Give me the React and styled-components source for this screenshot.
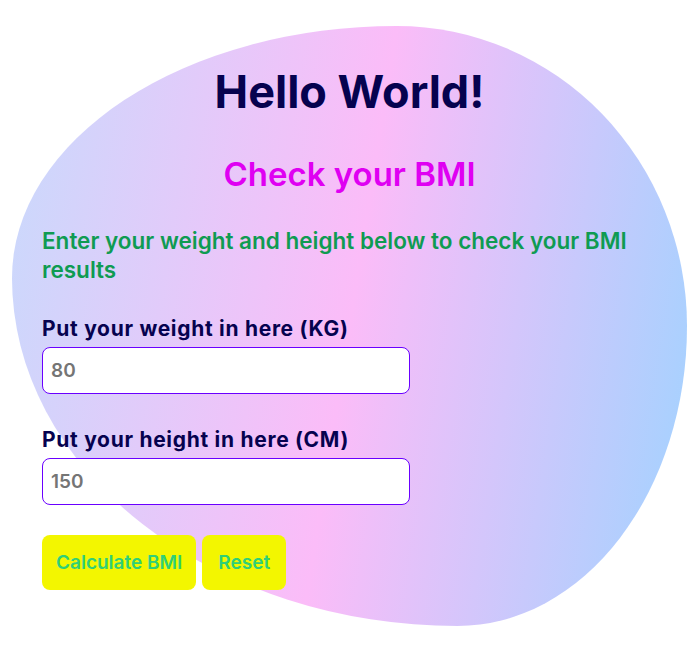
import React, { useState } from "react";
import styled, { createGlobalStyle } from "styled-components";

const GlobalStyle = createGlobalStyle`
  * {
    box-sizing: border-box;
  }

  body {
    margin: 0;
    background: #ffffff;
    font-family: Inter, "Noto Sans", sans-serif;
  }
`;

const Page = styled.main`
  padding: 26px 10px 25px 12px;
`;

// the big gradient blob that holds the form
const Blob = styled.section`
  width: 675px;
  height: 600px;
  padding: 36px 30px 0 30px;
  border-radius: 57% 43% 34% 66% / 42% 50% 50% 58%;
  background: linear-gradient(99deg, #c8dafc 0%, #fbbcf8 50%, #a0d3ff 100%);
`;

const Title = styled.h1`
  margin: 0;
  font-size: 45px;
  line-height: 60px;
  font-weight: 700;
  text-align: center;
  color: #06024f;
`;

const Subtitle = styled.h2`
  margin: 32px 0 0;
  font-size: 33px;
  line-height: 40px;
  font-weight: 600;
  text-align: center;
  color: #df00f2;
`;

const Intro = styled.p`
  margin: 32px 0 0;
  font-size: 22.5px;
  line-height: 29px;
  font-weight: 600;
  color: #0f9b52;
`;

const Field = styled.div`
  display: flex;
  flex-direction: column;
  gap: 5px;
  margin-top: ${(p) => p.$top}px;
`;

const Label = styled.label`
  font-size: 21px;
  line-height: 26px;
  font-weight: 700;
  letter-spacing: 0.7px;
  color: #06024f;
`;

const Input = styled.input`
  width: 368px;
  height: 47px;
  padding: 0 8px;
  border: 1px solid #6a00ff;
  border-radius: 8px;
  background: #ffffff;
  font-family: inherit;
  font-size: 19px;
  font-weight: 600;
  color: #757575;
  outline: none;
`;

const Actions = styled.div`
  display: flex;
  gap: 6px;
  margin-top: 30px;
`;

const Button = styled.button`
  height: 55px;
  padding: 0 ${(p) => p.$pad}px;
  border: none;
  border-radius: 8px;
  background: #f3f600;
  font-family: inherit;
  font-size: 19px;
  font-weight: 600;
  color: #2fcf78;
  cursor: pointer;
`;

const App = () => {
  const [weight, setWeight] = useState("80");
  const [height, setHeight] = useState("150");

  return (
    <Page>
      <GlobalStyle />
      <Blob>
        <Title>Hello World!</Title>
        <Subtitle>Check your BMI</Subtitle>
        <Intro>Enter your weight and height below to check your BMI results</Intro>

        <Field $top={32}>
          <Label htmlFor="weight">Put your weight in here (KG)</Label>
          <Input id="weight" value={weight} onChange={(e) => setWeight(e.target.value)} />
        </Field>

        <Field $top={33}>
          <Label htmlFor="height">Put your height in here (CM)</Label>
          <Input id="height" value={height} onChange={(e) => setHeight(e.target.value)} />
        </Field>

        <Actions>
          <Button $pad={14}>Calculate BMI</Button>
          <Button $pad={16}>Reset</Button>
        </Actions>
      </Blob>
    </Page>
  );
};

export default App;
